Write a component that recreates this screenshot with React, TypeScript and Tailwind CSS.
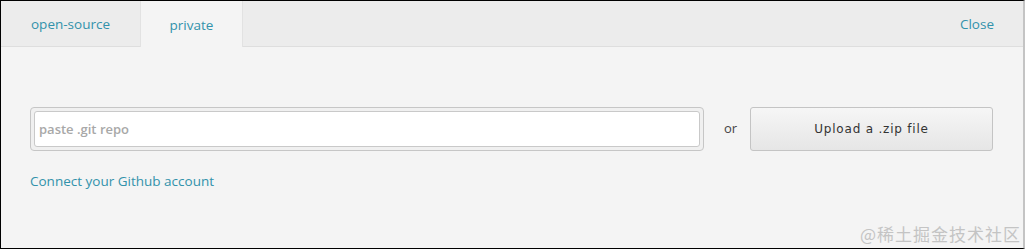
export default function App() {
  return (
    <div className="relative w-[1028px] h-[250px] bg-white font-['Open_Sans',sans-serif]">
      <div className="w-[1025px] h-[249px] border-t border-l border-b border-black border-r-2 border-r-[#c4c4c4] bg-[#f4f4f4] flex flex-col">
        {/* tabs */}
        <div className="h-[46px] flex items-stretch bg-[#ececec] border-b border-[#dedede] text-[13.5px] text-[#3292ab]">
          <div className="w-[139px] flex items-center justify-center pt-[1px]">open-source</div>
          <div className="w-[103px] flex items-center justify-center pt-[3px] bg-[#f4f4f4] border-x border-[#e2e2e2] -mb-px">
            private
          </div>
          <div className="flex-1" />
          <div className="flex items-center pr-[29px] pt-[1px]">Close</div>
        </div>

        {/* body */}
        <div className="pl-[29px] pt-[60px] flex flex-col">
          <div className="flex items-center h-[44px]">
            <div className="w-[674px] h-[44px] p-[3px] border border-[#c6c6c6] rounded-[4px] bg-[#f0f0f0]">
              <input
                className="w-full h-full bg-white border border-[#c9c9c9] rounded-[3px] px-[4px] text-[13px] font-semibold text-[#555] placeholder:text-[#a8a8a8] outline-none"
                placeholder="paste .git repo"
              />
            </div>
            <span className="ml-[20px] w-[26px] text-[13px] text-[#444]">or</span>
            <button className="w-[243px] h-[44px] border border-[#c4c4c4] rounded-[3px] bg-gradient-to-b from-[#f6f6f6] to-[#e6e6e6] text-[12px] tracking-[0.8px] text-[#333] font-['DejaVu_Sans',sans-serif]">
              Upload a .zip file
            </button>
          </div>
          <a className="mt-[20px] text-[13.5px] text-[#3292ab] w-max">Connect your Github account</a>
        </div>
      </div>
      <div className="absolute right-[7px] bottom-[8px] text-[17px] tracking-[1px] text-[#c4c4c4] font-['Noto_Sans_CJK_SC',sans-serif] leading-none">
        @稀土掘金技术社区
      </div>
    </div>
  );
}
